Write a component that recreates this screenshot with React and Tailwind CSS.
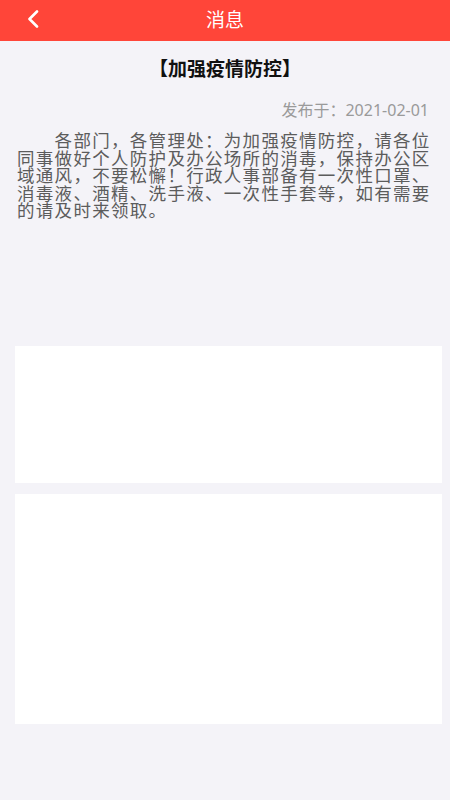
export default function App() {
  const font = { fontFamily: '"Noto Sans", "Noto Sans CJK SC", sans-serif' };

  return (
    <div className="min-h-[800px] w-[450px] bg-[#f4f3f8]" style={font}>
      <header className="relative flex h-[41px] items-center justify-center bg-[#ff4539]">
        <button className="absolute left-[26px] top-[10px] flex h-[18px] w-[14px] items-center justify-center">
          <svg width="12" height="18" viewBox="0 0 12 18" fill="none">
            <path d="M10 1.5 L2.5 9 L10 16.5" stroke="white" strokeWidth="2.6" strokeLinecap="round" strokeLinejoin="round" />
          </svg>
        </button>
        <h1 className="text-[19px] leading-none text-white">消息</h1>
      </header>

      <div className="pt-[16px]">
        <h2 className="text-center text-[19px] font-bold leading-[25px] text-[#111]">【加强疫情防控】</h2>
        <p className="mt-[18px] pr-[21px] text-right text-[16px] leading-[20px] text-[#9a9a9a]">发布于：2021-02-01</p>
        <p className="mt-[12px] pl-[17px] pr-[17px] indent-[37.6px] text-[17.5px] leading-[17.5px] tracking-[1.3px] text-[#5c5c5c]">
          各部门，各管理处：为加强疫情防控，请各位同事做好个人防护及办公场所的消毒，保持办公区域通风，不要松懈！行政人事部备有一次性口罩、消毒液、酒精、洗手液、一次性手套等，如有需要的请及时来领取。
        </p>
      </div>

      <div className="ml-[15px] mr-[8px] mt-[126px] h-[137px] bg-white" />
      <div className="ml-[15px] mr-[8px] mt-[11px] h-[230px] bg-white" />
    </div>
  );
}
